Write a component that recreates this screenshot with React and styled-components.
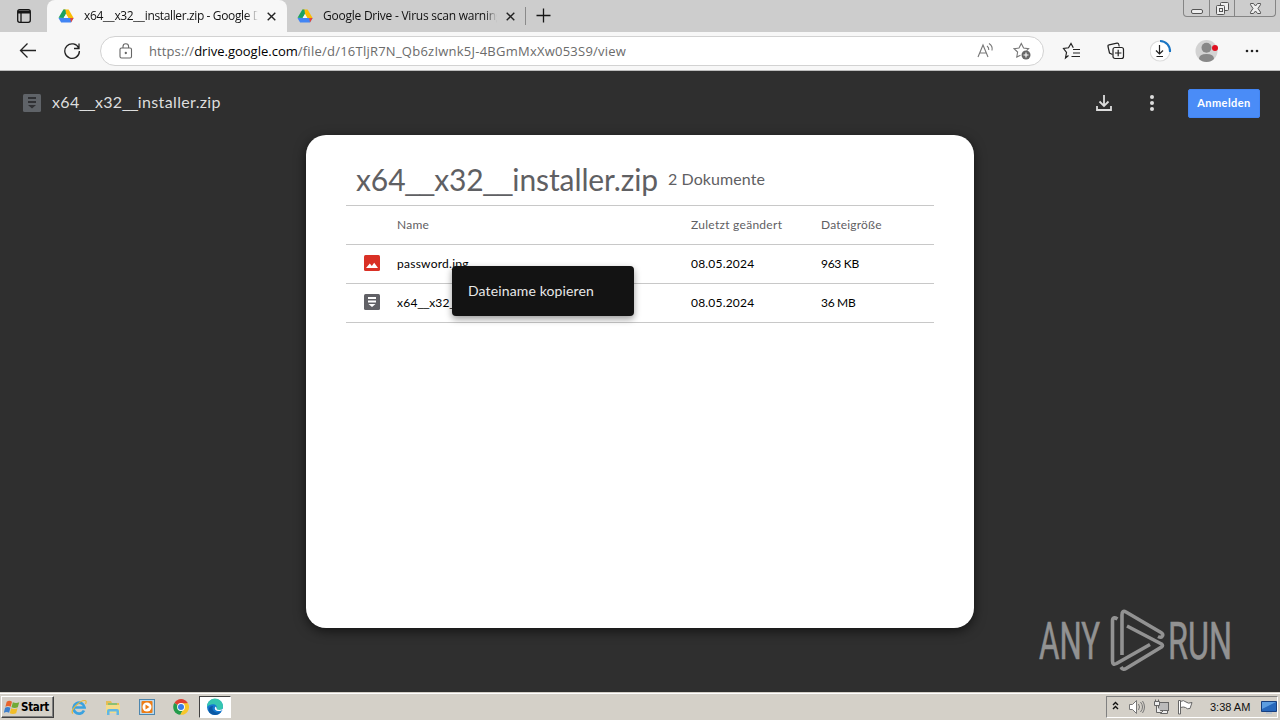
import styled, { createGlobalStyle } from "styled-components";

const GlobalStyle = createGlobalStyle`
  * {
    box-sizing: border-box;
  }
  body {
    margin: 0;
    overflow: hidden;
    font-family: "Open Sans", "Noto Sans", sans-serif;
  }
  svg {
    display: block;
    flex: none;
  }
`;

const Screen = styled.div`
  width: 1280px;
  height: 720px;
  display: flex;
  flex-direction: column;
  background-color: #2f2f2f;
`;

const Label = styled.span`
  white-space: pre;
  line-height: 1.3;
  font-size: ${(p) => p.$size || 12}px;
  letter-spacing: ${(p) => p.$spacing || 0}px;
  color: ${(p) => p.$color || "#111"};
`;
const Underscores = styled.span`
  font-family: "Liberation Sans", sans-serif;
  font-size: 0.86em;
  letter-spacing: 0;
`;

/* ---------- browser chrome ---------- */

const TabStrip = styled.div`
  height: 32px;
  flex: none;
  display: flex;
  background-color: #cdcdcd;
`;
const TabActions = styled.div`
  width: 47px;
  display: flex;
  align-items: center;
  padding-left: 16px;
`;
const Tab = styled.div`
  width: ${(p) => p.$width}px;
  height: 32px;
  padding: 0 10px 0 ${(p) => (p.$active ? 11 : 10)}px;
  display: flex;
  align-items: center;
  border-radius: 8px 8px 0 0;
  background-color: ${(p) => (p.$active ? "#f7f7f7" : "transparent")};
`;
const TabTitle = styled.div`
  width: 174px;
  height: 18px;
  margin: 0 9px 0 10px;
  overflow: hidden;
  line-height: 15px;
  mask-image: linear-gradient(90deg, #000 93%, transparent);
`;
const Divider = styled.div`
  width: 1px;
  height: 18px;
  margin: 7px 10px 0 0;
  background-color: #8a8a8a;
`;
const NewTab = styled.div`
  padding-top: 8px;
`;
const WindowControls = styled.div`
  width: 93px;
  height: 17px;
  margin: 0 4px 0 auto;
  display: grid;
  grid-template-columns: 25px 25px 1fr;
  border: 1px solid #858585;
  border-top: none;
  border-radius: 0 0 4px 4px;
`;
const WindowButton = styled.div`
  display: flex;
  align-items: center;
  justify-content: center;
  & + & {
    border-left: 1px solid #858585;
  }
`;
const Toolbar = styled.div`
  height: 39px;
  flex: none;
  display: flex;
  align-items: center;
  padding-left: 19px;
  background-color: #f7f7f7;
  border-bottom: 1px solid #bdbdbd;
`;
const AddressBar = styled.div`
  width: 944px;
  height: 30px;
  margin-left: 19px;
  padding: 0 12px 0 18px;
  display: flex;
  align-items: center;
  border: 1px solid #d2d2d2;
  border-radius: 15px;
  background-color: white;
`;
const Url = styled.div`
  flex: 1;
  margin-left: 16px;
  padding-bottom: 3px;
`;
const ToolIcons = styled.div`
  display: flex;
  align-items: center;
  gap: 21px;
  margin-left: 16px;
`;

/* ---------- drive viewer ---------- */

const Viewer = styled.main`
  height: 621px;
  flex: none;
  display: flex;
  flex-direction: column;
  align-items: center;
  position: relative;
  background-color: #2f2f2f;
  font-family: "Lato", sans-serif;
`;
const ViewerHeader = styled.header`
  width: 100%;
  height: 64px;
  padding: 0 20px;
  display: flex;
  align-items: center;
`;
const FileTitle = styled.div`
  flex: 1;
  margin-left: 8px;
  padding-bottom: 2px;
`;
const HeaderActions = styled.div`
  display: flex;
  gap: 24px;
  margin-right: 24px;
`;
const SignIn = styled.button`
  width: 72px;
  height: 29px;
  padding: 0 0 1px;
  border: 1px solid #4285f4;
  border-radius: 2px;
  background-color: #4a8cf7;
  color: white;
  font: bold 11px "Lato", sans-serif;
  letter-spacing: 0.45px;
`;
const Card = styled.section`
  width: 668px;
  height: 493px;
  padding: 19px 40px 0;
  border-radius: 20px;
  background-color: white;
  box-shadow: 0 3px 12px rgba(0, 0, 0, 0.6);
`;
const CardHeading = styled.div`
  height: 52px;
  padding-left: 10px;
  display: flex;
  align-items: center;
  gap: 10px;
  border-bottom: 1px solid #c8c8c8;
`;
const Row = styled.div`
  height: 39px;
  display: grid;
  grid-template-columns: 51px 294px 130px 1fr;
  align-items: center;
  border-bottom: 1px solid #c8c8c8;
`;
const TypeIcon = styled.div`
  padding-left: 18px;
  padding-bottom: 2px;
`;
const ContextMenu = styled.div`
  position: absolute;
  left: 452px;
  top: 195px;
  width: 182px;
  height: 50px;
  padding-left: 16px;
  display: flex;
  align-items: center;
  border-radius: 4px;
  background-color: #131313;
  box-shadow: 0 3px 7px rgba(0, 0, 0, 0.4);
`;
const Watermark = styled.div`
  position: absolute;
  left: 1036px;
  top: 535px;
`;

/* ---------- taskbar ---------- */

const Taskbar = styled.footer`
  height: 28px;
  flex: none;
  display: flex;
  align-items: center;
  padding: 1px 2px 0 1px;
  border-top: 1px solid #d4d0c8;
  box-shadow: inset 0 1px 0 #fff;
  background-color: #d4d0c8;
`;
const StartButton = styled.div`
  width: 53px;
  height: 22px;
  display: flex;
  align-items: center;
  gap: 1px;
  padding-left: 2px;
  border: 1px solid;
  border-color: #fff #404040 #404040 #fff;
  box-shadow: inset -1px -1px 0 #808080;
  font: bold 11.5px "DejaVu Sans Condensed", "DejaVu Sans", sans-serif;
  letter-spacing: -0.3px;
`;
const QuickLaunch = styled.div`
  display: flex;
  gap: 18px;
  margin: 0 10px 0 17px;
`;
const TaskButton = styled.div`
  width: 32px;
  height: 22px;
  display: flex;
  align-items: center;
  justify-content: center;
  border: 1px solid;
  border-color: #404040 #fff #fff #404040;
  background-color: white;
`;
const Tray = styled.div`
  width: 172px;
  height: 22px;
  margin-left: auto;
  padding-left: 5px;
  display: flex;
  align-items: center;
  border: 1px solid;
  border-color: #808080 #fff #fff #808080;
  font-family: "Liberation Sans", sans-serif;
`;
const Clock = styled.div`
  width: 44px;
  margin: 0 8px 0 16px;
  font-size: 11px;
  white-space: nowrap;
  color: #111;
`;

const DriveLogo = () => (
  <svg width="16" height="16" viewBox="0 0 16 16">
    <path d="M10.6 1.5 15.6 10h-5.3L5.4 1.5z" fill="#fbbc04" />
    <path d="M5.4 1.5h2L8 6l-2.4 4L.5 9.8z" fill="#1aa260" />
    <path d="M.5 10h15.1L13 14.5H3.1z" fill="#4285f4" />
    <path d="m12.2 10 3.4 0-2.6 4.5z" fill="#ea4335" />
    <path d="M8 6 5.6 10h4.7z" fill="#f7f7f7" />
  </svg>
);

const CloseIcon = () => (
  <svg width="9" height="9" viewBox="0 0 9 9" stroke="#222" strokeWidth="1.4">
    <path d="m.7.7 7.6 7.6M8.3.7.7 8.3" />
  </svg>
);

const ArchiveIcon = () => (
  <svg width="16" height="16" viewBox="0 0 16 16">
    <rect width="16" height="16" rx="1.5" fill="#616166" />
    <path d="M4 3h8v2H4zM4 6.5h8v2H4zM4.5 10h7L8 13z" fill="#fff" />
  </svg>
);

const ImageIcon = () => (
  <svg width="16" height="16" viewBox="0 0 16 16">
    <rect width="16" height="16" rx="1.5" fill="#d93025" />
    <path d="m2 13 3.8-4.5L7.8 11l2.4-3.2L14 13z" fill="#fff" />
  </svg>
);

const FileName = ({ children }) =>
  children.split(/(__)/).map((part, i) => (part === "__" ? <Underscores key={i}>__</Underscores> : part));

const BrowserTab = ({ title, active, width, spacing }) => (
  <Tab $active={active} $width={width}>
    <DriveLogo />
    <TabTitle>
      <Label $size={12} $spacing={spacing}>
        <FileName>{title}</FileName>
      </Label>
    </TabTitle>
    <CloseIcon />
  </Tab>
);

const Browser = () => (
  <>
    <TabStrip>
      <TabActions>
        <svg width="16" height="16" fill="none" stroke="#151515" strokeWidth="1.3">
          <rect x="1.7" y="1.7" width="12.6" height="12.6" rx="2" />
          <path d="M2 3.3h12M2 4.7h12" strokeWidth="1.6" />
          <path d="M5 5v9" />
        </svg>
      </TabActions>
      <BrowserTab active width={240} title="x64__x32__installer.zip - Google D" spacing={-0.37} />
      <BrowserTab width={238} title="Google Drive - Virus scan warning" spacing={-0.24} />
      <Divider />
      <NewTab>
        <svg width="15" height="15" stroke="#151515" strokeWidth="1.3">
          <path d="M7.5.5v14M.5 7.5h14" />
        </svg>
      </NewTab>
      <WindowControls>
        <WindowButton>
          <svg width="14" height="15" fill="#eee" stroke="#555">
            <rect x="1.5" y="8.5" width="11" height="4" rx="1.5" />
          </svg>
        </WindowButton>
        <WindowButton>
          <svg width="14" height="15" fill="#eee" stroke="#555">
            <rect x="5.5" y="1.5" width="8" height="8" rx="1" />
            <rect x="1.5" y="4.5" width="8" height="9" rx="1" />
            <rect x="4.5" y="7.5" width="3" height="3" />
          </svg>
        </WindowButton>
        <WindowButton>
          <svg width="13" height="13" fill="#eee" stroke="#555">
            <path d="M1.5 1.5h3l2 2.5 2-2.5h3v1.2L9 6.5l2.5 3.7v1.3h-3l-2-2.5-2 2.5h-3v-1.3L4 6.5 1.5 2.7z" />
          </svg>
        </WindowButton>
      </WindowControls>
    </TabStrip>
    <Toolbar>
      <svg width="18" height="18" fill="none" stroke="#222" strokeWidth="1.3">
        <path d="M17 8.5H1.5M8.5 1.5l-7 7 7 7" />
      </svg>
      <svg width="18" height="18" fill="none" stroke="#222" strokeWidth="1.3" style={{ marginLeft: 26 }}>
        <path d="M15.8 6.2a7.3 7.3 0 1 0 .6 2.8M16 1.5v5h-5" />
      </svg>
      <AddressBar>
        <svg width="14" height="17" fill="none" stroke="#666" strokeWidth="1.1">
          <rect x="1" y="5" width="11.5" height="10" rx="1.5" />
          <path d="M4 5V3.6a2.8 2.8 0 0 1 5.6 0V5" />
          <circle cx="6.8" cy="10" r=".6" fill="#666" />
        </svg>
        <Url>
          <Label $size={13} $spacing={0.1} $color="#6b6b6b">https://</Label>
          <Label $size={13} $color="#000">drive.google.com</Label>
          <Label $size={13} $spacing={0.24} $color="#6b6b6b">/file/d/16TljR7N_Qb6zIwnk5J-4BGmMxXw053S9/view</Label>
        </Url>
        <svg width="17" height="18" fill="none" stroke="#777" strokeWidth="1.1">
          <path d="M1 15 6 3l5 12M3 11h6M10 4q2 1.5 1.8 4M12 1.5q4 2.5 3 7" />
        </svg>
        <svg width="18" height="18" fill="none" stroke="#777" strokeWidth="1.1" style={{ marginLeft: 19 }}>
          <path d="M7.5 13.2 3.8 15l.8-5L1 6.7l5-.6L8.3 1.5l2.3 4.6 5 .6-2 2" />
          <circle cx="13" cy="13" r="4.5" fill="#666" stroke="none" />
          <path d="M13 10.5v5M10.5 13h5" stroke="#fff" />
        </svg>
      </AddressBar>
      <ToolIcons>
        <svg width="24" height="24" fill="none" stroke="#222" strokeWidth="1.2">
          <path d="M8.5 16.5 5.5 19l1-5.5L3.5 9.5l5-.7L11 4.5l2.3 4.3M13 10.5h7M13 14h7M11.5 17.5H20" />
        </svg>
        <svg width="24" height="24" fill="none" stroke="#222" strokeWidth="1.2">
          <path d="M7.5 15.5 4.5 14 3 7.5q-.3-1.5 1-1.7l8-1.6q1.5-.2 1.8 1.3l.4 2" />
          <rect x="8" y="8.5" width="10.5" height="11" rx="2" />
          <path d="M13.2 10.8v6.4M10 14h6.4" />
        </svg>
        <svg width="24" height="24" fill="none" stroke="#222" strokeWidth="1.2">
          <circle cx="10" cy="12" r="10" fill="#fff" stroke="#ddd" />
          <path d="M10 2a10 10 0 0 1 10 11" stroke="#1a75c4" strokeWidth="2" />
          <path d="M9.5 6v9M6 11.5l3.5 3.5 3.5-3.5M6.5 17.5h6.5" />
        </svg>
        <svg width="26" height="24">
          <circle cx="11.5" cy="12" r="11" fill="#d3d3d3" />
          <circle cx="11.5" cy="8.8" r="5" fill="#888" />
          <path d="M4 20q0-5 7.5-5t7.5 5q-3 3-7.5 3T4 20" fill="#888" />
          <circle cx="20" cy="9" r="3" fill="#e01020" />
        </svg>
        <svg width="20" height="20" fill="#222">
          <circle cx="5" cy="10" r="1.3" />
          <circle cx="10" cy="10" r="1.3" />
          <circle cx="15" cy="10" r="1.3" />
        </svg>
      </ToolIcons>
    </Toolbar>
  </>
);

const files = [
  { icon: <ImageIcon />, name: "password.jpg", date: "08.05.2024", size: "963 KB" },
  { icon: <ArchiveIcon />, name: "x64__x32__installer.zip", date: "08.05.2024", size: "36 MB" },
];

const DriveViewer = () => (
  <Viewer>
    <ViewerHeader>
      <svg width="24" height="24" viewBox="0 0 24 24">
        <rect x="3" y="3" width="18" height="18" rx="1.5" fill="#5f6368" />
        <path d="M8 6h8v2H8zM8 10h8v2H8zM8 14h8l-4 3.5z" fill="#303134" />
      </svg>
      <FileTitle>
        <Label $size={16} $spacing={0.36} $color="#dedede">
          <FileName>x64__x32__installer.zip</FileName>
        </Label>
      </FileTitle>
      <HeaderActions>
        <svg width="24" height="24" fill="none" stroke="#ddd" strokeWidth="1.8">
          <path d="M12 4v11M7.5 10.5 12 15l4.5-4.5M5 15v4h14v-4" />
        </svg>
        <svg width="24" height="24" fill="#ddd">
          <circle cx="12" cy="6" r="2" />
          <circle cx="12" cy="12" r="2" />
          <circle cx="12" cy="18" r="2" />
        </svg>
      </HeaderActions>
      <SignIn>Anmelden</SignIn>
    </ViewerHeader>
    <Card>
      <CardHeading>
        <Label $size={30} $spacing={-0.1} $color="#5f6063">
          <FileName>x64__x32__installer.zip</FileName>
        </Label>
        <Label $size={16} $spacing={0.08} $color="#5f6063">2 Dokumente</Label>
      </CardHeading>
      <Row>
        <span />
        <Label $color="#5f6063" $spacing={0.25}>Name</Label>
        <Label $color="#5f6063" $spacing={0.28}>Zuletzt geändert</Label>
        <Label $color="#5f6063" $spacing={0.2}>Dateigröße</Label>
      </Row>
      {files.map((file) => (
        <Row key={file.name}>
          <TypeIcon>{file.icon}</TypeIcon>
          <Label $color="#000" $spacing={0.25}>
            <FileName>{file.name}</FileName>
          </Label>
          <Label $color="#000" $spacing={0.2}>{file.date}</Label>
          <Label $color="#000" $spacing={-0.3}>{file.size}</Label>
        </Row>
      ))}
    </Card>
    <ContextMenu>
      <Label $size={14} $spacing={0.13} $color="#e8e8e8">Dateiname kopieren</Label>
    </ContextMenu>
    <Watermark>
      <svg width="210" height="72" fill="none" stroke="#929292" strokeWidth="3.6">
        <g fill="#929292" strokeWidth="0.6" fontFamily="Roboto, sans-serif" fontSize="51">
          <text x="3" y="53" textLength="61" lengthAdjust="spacingAndGlyphs">ANY</text>
          <text x="132" y="53" textLength="64" lengthAdjust="spacingAndGlyphs">RUN</text>
        </g>
        <g strokeLinejoin="round">
          <path d="M81.5 13q-5-3-5 2v40q0 4.500 4 2.500L114 38.500" />
          <path d="M86 49V9q0-5 4-3l35 20.500q3 2 1 4-1 1.500-4 0" />
          <path d="m91 20 34.500 18q2 1.500 0 3L90 62.500q-3 2-5-1.500" />
        </g>
      </svg>
    </Watermark>
  </Viewer>
);

const EdgeLogo = () => (
  <svg width="18" height="18" viewBox="0 0 18 18">
    <circle cx="9" cy="9" r="8" fill="#1479cf" />
    <path d="M1 9a8 8 0 0 1 16-1c.5 4-4 5-6.500 3.500C13 6 5 4 1 9z" fill="#35c6b0" />
    <path d="M7 8c-2 4 2 8 8 6-3 4-9 4-12 0-1-4 1-6 4-6z" fill="#0c59a4" />
    <path d="M10 8.500c-2 .8-1.500 4.300 2 4.500 2.500.1 4-.5 6-2v-1c-2 2-5 2.500-7 1.500z" fill="#fff" />
  </svg>
);

const WindowsTaskbar = () => (
  <Taskbar>
    <StartButton>
      <svg width="16" height="17" viewBox="0 0 15 16">
        <path d="M2.5 2.5q2.500-1.500 5 0L6.300 7.300q-2.500-1.400-5 0z" fill="#e8642c" />
        <path d="M8.300 3q3 1.300 6 0L13 7.800q-3 1.300-6 0z" fill="#70aa35" />
        <path d="M1 8.300q2.500-1.400 5 0L4.800 13q-2.500-1.500-5 0z" fill="#3d7fcc" />
        <path d="M6.700 8.800q3 1.300 6 0l-1.300 4.700q-3 1.300-6 0z" fill="#f1bd28" />
      </svg>
      Start
    </StartButton>
    <QuickLaunch>
      <svg width="16" height="16" viewBox="0 0 16 16" fill="none">
        <path d="M13 11.500A5.500 5.500 0 1 1 13.500 8.500H4" stroke="#3ba2df" strokeWidth="2.7" />
        <path d="M2 14.500C-2 12 9 1 14 1.500q2 .5.5 3.500" stroke="#e8b83b" strokeWidth="1.2" />
      </svg>
      <svg width="16" height="16" viewBox="0 0 16 16">
        <path d="M1 2h5l1 2h7v10H1z" fill="#e5bd55" />
        <path d="M3 4h9v4H3z" fill="#8bbf72" />
        <path d="M1 6h14v8H1z" fill="#f4dc8a" />
        <path d="M2 16v-4q0-2 2-2h8q2 0 2 2v4h-2.500v-3.500h-7V16z" fill="#61b7e4" />
      </svg>
      <svg width="16" height="16" viewBox="0 0 16 16">
        <rect x=".5" y=".5" width="15" height="15" fill="#b9d9ef" stroke="#4d86ae" />
        <rect x="2.5" y="2" width="11" height="12" rx="1" fill="#ed7d17" />
        <circle cx="8" cy="8" r="4.5" fill="#fff" />
        <path d="m6.500 5.500 4 2.500-4 2.500z" fill="#ed7d17" />
      </svg>
      <svg width="16" height="16" viewBox="0 0 16 16">
        <path d="M8 8 1.300 4A7.800 7.800 0 0 1 14.800 4z" fill="#df4032" />
        <path d="M8 8 1.300 4a7.800 7.800 0 0 0 6 11.800l3.500-6z" fill="#249b4b" />
        <path d="M8 4.300h7A7.800 7.800 0 0 1 7.300 15.800L11 9z" fill="#f7c72b" />
        <circle cx="8" cy="8" r="3.9" fill="#fff" />
        <circle cx="8" cy="8" r="3" fill="#397de8" />
      </svg>
    </QuickLaunch>
    <TaskButton>
      <EdgeLogo />
    </TaskButton>
    <Tray>
      <svg width="8" height="14" fill="none" stroke="#111" strokeWidth="1.4">
        <path d="m1 5 2.500-2.500L6 5M1 9l2.500-2.500L6 9" />
      </svg>
      <svg width="18" height="16" fill="none" stroke="#777" style={{ marginLeft: 8 }}>
        <path d="M1.500 5.500h3l4-4v13l-4-4h-3z" fill="#fff" />
        <path d="M10.500 5q2 3 0 6M12.500 3q4 5 0 10M14.500 2q4 6 0 12" />
      </svg>
      <svg width="17" height="16" fill="#eee" stroke="#666" style={{ marginLeft: 7 }}>
        <rect x="5.5" y="3.5" width="10" height="8" fill="#bbb" />
        <path d="M1.500 2.500h5v4h-5zM3.500 6.500v7h5M2.500.5v2M5.500.5v2M7.500 14.500h7v-3h-4z" />
      </svg>
      <svg width="17" height="16" fill="#fff" stroke="#666" style={{ marginLeft: 7 }}>
        <path d="M1.500 15V1.500h2V15zM3.500 2.500q3-2 5.500.5 2 2 6 .5l-2 6q-3 1-4.500-1-2-1-5 0z" />
      </svg>
      <Clock>3:38 AM</Clock>
      <svg width="16" height="15">
        <path d="M.5 1.500h15v10H.5z" fill="#2667bb" stroke="#173f7f" />
        <path d="M1 2h14L1 9z" fill="#5c9de0" />
        <path d="M5 12h6v2H5z" fill="#b9c4d0" />
      </svg>
    </Tray>
  </Taskbar>
);

export default function App() {
  return (
    <Screen>
      <GlobalStyle />
      <Browser />
      <DriveViewer />
      <WindowsTaskbar />
    </Screen>
  );
}
